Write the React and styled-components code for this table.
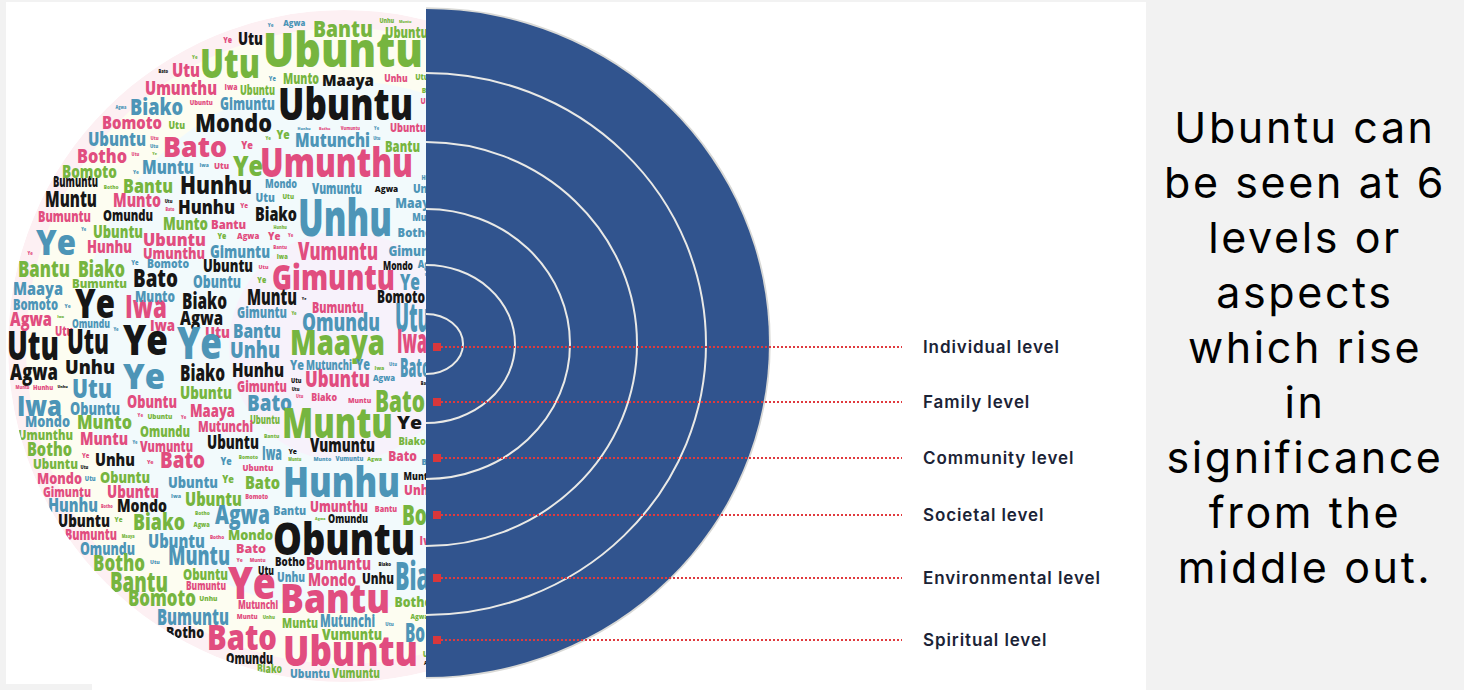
import React, { useMemo } from "react";
import styled, { createGlobalStyle } from "styled-components";

const GlobalStyle = createGlobalStyle`
  html, body { margin: 0; padding: 0; background: #f2f2f2; }
  body { font-family: Inter, "Open Sans", sans-serif; }
`;

const Page = styled.div`
  display: flex;
  width: 1464px;
  height: 690px;
  overflow: hidden;
  background: #f2f2f2;
`;

const Slide = styled.section`
  position: relative;
  flex: none;
  width: 1140px;
  height: 688px;
  margin: 2px 0 0 6px;
  background: #fff;

  &::after {
    content: "";
    position: absolute;
    left: 0;
    bottom: 0;
    width: 86px;
    height: 6px;
    background: #f2f2f2;
  }
`;

const Diagram = styled.svg`
  display: block;
`;

const CloudWords = styled.g`
  font-family: "Open Sans", "Noto Sans", sans-serif;
  font-weight: 800;
`;

const Legend = styled.ul`
  position: absolute;
  left: 427px;
  top: 340px;
  margin: 0;
  padding: 0;
  list-style: none;
  display: flex;
  flex-direction: column;
`;

const Row = styled.li`
  display: flex;
  align-items: center;
  height: 10px;
  margin-top: ${(p) => p.$space}px;
`;

const Marker = styled.span`
  flex: none;
  width: 8px;
  height: 8px;
  background: #d8373b;
`;

const Leader = styled.span`
  flex: none;
  width: 461px;
  height: 2px;
  background: repeating-linear-gradient(to right, #e03a3e 0 2px, transparent 2px 4px);
`;

const Label = styled.span`
  margin-left: 21px;
  font-family: Inter, "Open Sans", sans-serif;
  font-weight: 600;
  font-size: 17px;
  line-height: 10px;
  letter-spacing: 0.9px;
  color: #1b2336;
  white-space: nowrap;
`;

const Aside = styled.aside`
  flex: 1;
  display: flex;
  align-items: center;
  justify-content: center;
  padding-top: 5px;
`;

const Statement = styled.p`
  margin: 0;
  font-family: Inter, "Open Sans", sans-serif;
  font-weight: 400;
  font-size: 43px;
  line-height: 55px;
  letter-spacing: 2.6px;
  text-align: center;
  color: #000;
`;

const LEVELS = [
  { label: "Individual level", space: 0 },
  { label: "Family level", space: 45 },
  { label: "Community level", space: 46 },
  { label: "Societal level", space: 47 },
  { label: "Environmental level", space: 53 },
  { label: "Spiritual level", space: 52 },
];

const COLORS = { G: "#76b53f", P: "#e14d7f", B: "#4d95b7", K: "#161616" };

const NAMES = [
  "Ubuntu", "Umunthu", "Unhu", "Hunhu", "Muntu", "Bantu", "Botho", "Bomoto",
  "Biako", "Bato", "Gimuntu", "Mutunchi", "Vumuntu", "Bumuntu", "Omundu",
  "Obuntu", "Mondo", "Munto", "Maaya", "Agwa", "Iwa", "Utu", "Ye",
];

// [word, colour, x, baseline, width, font size] — the larger words of the cloud
const PLACED = [
  ["Ubuntu", "G", 263, 67, 160, 48], ["Utu", "G", 200, 78, 60, 41], ["Bantu", "G", 313, 37, 60, 23],
  ["Ubuntu", "K", 278, 120, 135, 44], ["Mondo", "K", 195, 132, 77, 24], ["Umunthu", "P", 260, 177, 153, 40],
  ["Bato", "P", 163, 157, 64, 28], ["Maaya", "K", 322, 86, 52, 16], ["Utu", "K", 238, 45, 25, 18],
  ["Utu", "P", 172, 77, 28, 20], ["Umunthu", "P", 145, 95, 72, 20], ["Biako", "B", 130, 115, 53, 22],
  ["Bomoto", "P", 102, 129, 60, 18], ["Ubuntu", "B", 88, 146, 58, 19], ["Botho", "P", 77, 163, 50, 20],
  ["Bomoto", "G", 62, 178, 55, 18], ["Muntu", "B", 142, 174, 52, 20], ["Ye", "G", 233, 176, 30, 28],
  ["Bantu", "G", 123, 193, 50, 20], ["Hunhu", "K", 180, 194, 72, 24], ["Hunhu", "K", 178, 214, 57, 19],
  ["Muntu", "K", 45, 207, 52, 22], ["Munto", "P", 113, 207, 48, 20], ["Bumuntu", "K", 53, 187, 45, 15],
  ["Gimuntu", "B", 220, 110, 55, 18], ["Mutunchi", "B", 295, 147, 75, 20], ["Biako", "K", 255, 221, 42, 19],
  ["Bantu", "G", 385, 152, 35, 16], ["Omundu", "K", 103, 221, 50, 15], ["Bumuntu", "P", 38, 222, 53, 15],
  ["Vumuntu", "B", 312, 194, 50, 15], ["Mondo", "B", 265, 188, 32, 13], ["Munto", "G", 163, 230, 45, 18],
  ["Ubuntu", "P", 390, 132, 36, 13], ["Munto", "G", 283, 84, 36, 15], ["Ubuntu", "G", 385, 38, 43, 15],
  ["Ubuntu", "G", 240, 95, 35, 14], ["Unhu", "B", 298, 236, 94, 52],
  ["Ye", "B", 36, 255, 40, 36], ["Hunhu", "P", 87, 253, 45, 17], ["Ubuntu", "G", 93, 238, 50, 17],
  ["Ubuntu", "P", 143, 246, 63, 18], ["Umunthu", "P", 143, 259, 62, 16], ["Gimuntu", "B", 210, 258, 60, 18],
  ["Bantu", "G", 18, 277, 52, 22], ["Biako", "G", 78, 277, 47, 22], ["Bato", "K", 133, 287, 45, 25],
  ["Bomoto", "B", 147, 268, 42, 13], ["Ubuntu", "K", 203, 272, 50, 18], ["Obuntu", "B", 193, 288, 48, 17],
  ["Gimuntu", "P", 272, 290, 123, 36], ["Ye", "B", 400, 290, 20, 22], ["Vumuntu", "P", 298, 260, 80, 24],
  ["Mondo", "K", 383, 270, 30, 12], ["Bomoto", "K", 377, 303, 48, 18], ["Maaya", "B", 13, 295, 50, 18],
  ["Bumuntu", "G", 72, 288, 55, 13], ["Ye", "K", 75, 318, 40, 40], ["Iwa", "P", 125, 318, 42, 32],
  ["Munto", "B", 135, 302, 40, 16], ["Biako", "K", 182, 309, 45, 22], ["Muntu", "K", 247, 305, 50, 22],
  ["Bomoto", "B", 13, 310, 45, 16], ["Agwa", "P", 10, 326, 42, 20], ["Utu", "P", 55, 336, 18, 14],
  ["Omundu", "B", 72, 328, 38, 12], ["Agwa", "K", 180, 325, 43, 20], ["Iwa", "P", 150, 331, 25, 16],
  ["Utu", "P", 205, 338, 25, 16], ["Gimuntu", "B", 237, 318, 50, 16], ["Bumuntu", "P", 312, 313, 52, 16],
  ["Utu", "B", 395, 332, 35, 40], ["Omundu", "B", 302, 331, 78, 24], ["Bantu", "B", 233, 338, 48, 20],
  ["Utu", "K", 7, 360, 52, 40], ["Utu", "K", 67, 354, 42, 36], ["Ye", "K", 123, 355, 45, 42],
  ["Ye", "B", 177, 359, 45, 44], ["Unhu", "B", 230, 358, 50, 22], ["Maaya", "G", 290, 355, 95, 36],
  ["Iwa", "P", 397, 353, 30, 34], ["Unhu", "K", 65, 374, 50, 20], ["Agwa", "K", 10, 380, 48, 22],
  ["Ye", "B", 123, 389, 42, 36], ["Biako", "K", 180, 381, 45, 22], ["Hunhu", "K", 232, 377, 52, 20],
  ["Ye", "B", 290, 370, 14, 14], ["Mutunchi", "B", 306, 370, 46, 14], ["Ye", "B", 356, 370, 14, 16],
  ["Bato", "B", 400, 377, 30, 26], ["Ubuntu", "P", 305, 387, 65, 22], ["Gimuntu", "P", 237, 392, 50, 16],
  ["Iwa", "B", 17, 416, 45, 28], ["Utu", "B", 72, 398, 40, 26], ["Ubuntu", "G", 180, 399, 52, 18],
  ["Bato", "B", 247, 411, 45, 22], ["Obuntu", "P", 127, 408, 50, 18], ["Obuntu", "B", 70, 415, 50, 18],
  ["Bato", "G", 375, 412, 50, 30], ["Muntu", "G", 282, 438, 111, 42], ["Ye", "K", 397, 429, 25, 18],
  ["Maaya", "P", 190, 417, 45, 18], ["Ubuntu", "G", 250, 424, 30, 12], ["Mondo", "B", 25, 427, 45, 16],
  ["Munto", "G", 77, 429, 55, 20], ["Mutunchi", "P", 198, 432, 55, 16],
  ["Umunthu", "G", 18, 440, 55, 14], ["Muntu", "P", 80, 445, 48, 18], ["Omundu", "G", 140, 437, 50, 16],
  ["Ubuntu", "K", 207, 449, 52, 20], ["Vumuntu", "K", 310, 452, 65, 20], ["Vumuntu", "P", 140, 452, 53, 16],
  ["Botho", "G", 27, 456, 45, 20], ["Iwa", "B", 262, 460, 20, 20],
  ["Ubuntu", "G", 33, 469, 45, 14], ["Unhu", "K", 95, 466, 40, 18], ["Bato", "P", 160, 468, 45, 22],
  ["Hunhu", "B", 283, 497, 117, 42], ["Mondo", "P", 37, 484, 45, 16], ["Obuntu", "G", 100, 483, 50, 16],
  ["Ubuntu", "B", 168, 488, 50, 16], ["Bato", "G", 245, 489, 35, 18], ["Gimuntu", "P", 43, 497, 48, 14],
  ["Ubuntu", "P", 107, 498, 52, 18], ["Ubuntu", "G", 185, 506, 57, 20], ["Hunhu", "B", 48, 512, 50, 20],
  ["Mondo", "K", 117, 512, 50, 18], ["Umunthu", "P", 310, 512, 58, 16], ["Agwa", "B", 215, 524, 55, 26],
  ["Ubuntu", "K", 58, 527, 52, 18], ["Biako", "G", 133, 530, 52, 22], ["Omundu", "K", 328, 523, 40, 13],
  ["Obuntu", "K", 273, 555, 142, 44], ["Bo", "G", 402, 525, 25, 28], ["Bumuntu", "P", 65, 540, 52, 15],
  ["Ubuntu", "B", 148, 548, 57, 20], ["Mondo", "G", 228, 540, 45, 14], ["Omundu", "B", 80, 555, 55, 18],
  ["Muntu", "B", 168, 565, 62, 26], ["Bato", "P", 236, 553, 30, 13], ["Botho", "G", 93, 571, 52, 22],
  ["Botho", "K", 275, 566, 30, 12], ["Bumuntu", "P", 306, 570, 65, 18], ["Obuntu", "G", 183, 580, 45, 16],
  ["Ye", "P", 228, 599, 48, 44], ["Utu", "K", 258, 575, 16, 12], ["Unhu", "B", 277, 582, 28, 14],
  ["Mondo", "P", 308, 586, 48, 18], ["Unhu", "K", 362, 584, 32, 16], ["Bia", "B", 395, 590, 35, 38],
  ["Bantu", "G", 110, 592, 58, 28], ["Bumuntu", "P", 186, 590, 40, 12], ["Bantu", "P", 280, 613, 110, 40],
  ["Bomoto", "G", 128, 606, 68, 22], ["Mutunchi", "P", 238, 609, 40, 12], ["Bumuntu", "B", 157, 625, 72, 22],
  ["Muntu", "G", 282, 628, 36, 14], ["Mutunchi", "B", 320, 627, 55, 18], ["Botho", "K", 166, 638, 38, 16],
  ["Bato", "P", 207, 650, 70, 36], ["Vumuntu", "G", 322, 640, 60, 16], ["Ubuntu", "P", 283, 666, 135, 42],
  ["Omundu", "K", 226, 664, 47, 16], ["Biako", "G", 257, 673, 25, 12], ["Ubuntu", "B", 290, 678, 40, 12],
  ["Vumuntu", "G", 332, 678, 48, 14], ["Bo", "B", 405, 642, 20, 26],
];

const CLOUD = { cx: 344, cy: 346, r: 336 };
const CENTRE = { x: 426, y: 344 };
const ARCS = [
  [37, 30], [89, 79], [144, 135], [211, 202], [280, 271],
];

function mulberry32(seed) {
  let a = seed;
  return function () {
    a |= 0;
    a = (a + 0x6d2b79f5) | 0;
    let t = Math.imul(a ^ (a >>> 15), 1 | a);
    t = (t + Math.imul(t ^ (t >>> 7), 61 | t)) ^ t;
    return ((t ^ (t >>> 14)) >>> 0) / 4294967296;
  };
}

function makeMeasure() {
  let ctx = null;
  try {
    ctx = document.createElement("canvas").getContext("2d");
    ctx.font = '800 100px "Open Sans"';
  } catch (e) {
    ctx = null;
  }
  return (text) => (ctx ? ctx.measureText(text).width / 100 : text.length * 0.6);
}

function layoutCloud() {
  const CELL = 2;
  const GW = 225;
  const GH = 346;
  const grid = new Uint8Array(GW * GH);
  const rand = mulberry32(11);
  const measure = makeMeasure();

  const span = (x0, y0, x1, y1) => [
    Math.max(0, Math.floor(x0 / CELL)),
    Math.max(0, Math.floor(y0 / CELL)),
    Math.min(GW - 1, Math.ceil(x1 / CELL)),
    Math.min(GH - 1, Math.ceil(y1 / CELL)),
  ];
  const mark = (x0, y0, x1, y1) => {
    const [a, b, c, d] = span(x0, y0, x1, y1);
    for (let j = b; j <= d; j++) for (let i = a; i <= c; i++) grid[j * GW + i] = 1;
  };
  const isFree = (x0, y0, x1, y1) => {
    const [a, b, c, d] = span(x0, y0, x1, y1);
    for (let j = b; j <= d; j++) for (let i = a; i <= c; i++) if (grid[j * GW + i]) return false;
    return true;
  };
  const inside = (x, y) => {
    const dx = x - CLOUD.cx;
    const dy = y - CLOUD.cy;
    return dx * dx + dy * dy <= (CLOUD.r - 3) * (CLOUD.r - 3);
  };

  const words = PLACED.map(([text, c, x, y, w, fs]) => {
    mark(x, y - fs * 0.74, x + w, y + fs * 0.08);
    return { text, fill: COLORS[c], x, y, w, fs };
  });

  const schedule = [
    [13, 30], [11, 50], [9.5, 90], [8, 160], [6.5, 260], [5.5, 420], [4.5, 600],
  ];
  const keys = ["G", "P", "B", "K", "G", "P", "B"];
  schedule.forEach(([fs, count]) => {
    for (let n = 0; n < count; n++) {
      const text = NAMES[Math.floor(rand() * NAMES.length)];
      const fill = COLORS[keys[Math.floor(rand() * keys.length)]];
      const size = fs * (0.9 + rand() * 0.2);
      const w = measure(text) * size * 0.88;
      const top = size * 0.74;
      const bottom = size * 0.1;
      for (let t = 0; t < 90; t++) {
        const x = CLOUD.cx - CLOUD.r + rand() * (440 - (CLOUD.cx - CLOUD.r));
        const y = CLOUD.cy - CLOUD.r + top + rand() * (2 * CLOUD.r);
        if (x + w > 444) continue;
        if (!inside(x, y - top) || !inside(x + w, y - top) || !inside(x, y + bottom) || !inside(x + w, y + bottom)) continue;
        if (!isFree(x - 0.5, y - top, x + w + 0.5, y + bottom)) continue;
        mark(x - 0.5, y - top, x + w + 0.5, y + bottom);
        words.push({ text, fill, x, y, w, fs: size });
        break;
      }
    }
  });
  return words;
}

function WordCloud() {
  const words = useMemo(layoutCloud, []);
  return (
    <g clipPath="url(#cloudClip)">
      <circle cx={CLOUD.cx} cy={CLOUD.cy} r={CLOUD.r} fill="#fdf0f3" />
      <circle cx={CLOUD.cx} cy={CLOUD.cy} r={318} fill="#fdfdf1" />
      <circle cx={CLOUD.cx} cy={CLOUD.cy} r={265} fill="#f2fafc" />
      <circle cx={CLOUD.cx} cy={CLOUD.cy} r={115} fill="#f7f2fb" />
      <CloudWords>
        {words.map((w, i) => (
          <text
            key={i}
            x={w.x.toFixed(1)}
            y={w.y.toFixed(1)}
            fontSize={w.fs.toFixed(1)}
            fill={w.fill}
            textLength={w.w.toFixed(1)}
            lengthAdjust="spacingAndGlyphs"
          >
            {w.text}
          </text>
        ))}
      </CloudWords>
    </g>
  );
}

function Rings() {
  const { x, y } = CENTRE;
  const outer = `M${x} 9 A343 334 0 0 1 ${x} 677`;
  return (
    <g>
      <path d={outer} fill="none" stroke="#d9d9d6" strokeWidth="3.5" />
      <path d={`${outer} Z`} fill="#31548e" />
      {ARCS.map(([rx, ry], i) => (
        <path
          key={i}
          d={`M${x} ${y - ry} A${rx} ${ry} 0 0 1 ${x} ${y + ry}`}
          fill="none"
          stroke="#e9e9e6"
          strokeWidth="2"
        />
      ))}
    </g>
  );
}

export default function App() {
  return (
    <Page>
      <GlobalStyle />
      <Slide>
        <Diagram width="780" height="688" viewBox="6 2 780 688">
          <defs>
            <clipPath id="cloudClip">
              <circle cx={CLOUD.cx} cy={CLOUD.cy} r={CLOUD.r} />
            </clipPath>
          </defs>
          <WordCloud />
          <Rings />
        </Diagram>
        <Legend>
          {LEVELS.map((l) => (
            <Row key={l.label} $space={l.space}>
              <Marker />
              <Leader />
              <Label>{l.label}</Label>
            </Row>
          ))}
        </Legend>
      </Slide>
      <Aside>
        <Statement>
          Ubuntu can
          <br />
          be seen at 6
          <br />
          levels or
          <br />
          aspects
          <br />
          which rise
          <br />
          in
          <br />
          significance
          <br />
          from the
          <br />
          middle out.
        </Statement>
      </Aside>
    </Page>
  );
}
